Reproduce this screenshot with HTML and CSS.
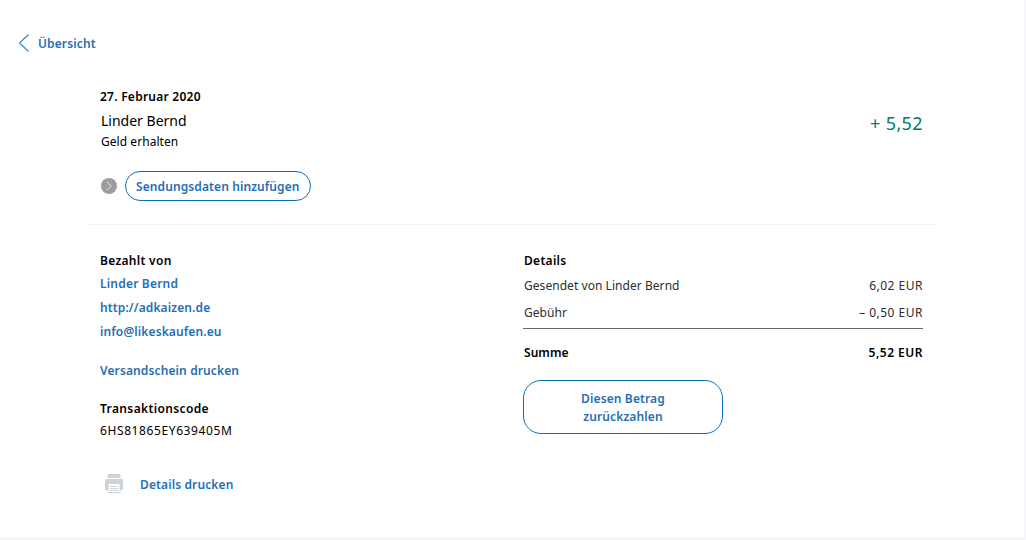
FILE: index.html
```html
<!DOCTYPE html>
<html lang="de">
<head>
<meta charset="utf-8">
<title>Transaktion</title>
<link rel="stylesheet" href="styles.css">
</head>
<body>
<main class="panel">
  <a class="back link">
    <svg class="back-icon" width="12" height="20" viewBox="0 0 12 20"><path d="M10.500 1.500 1.500 10l9 8.500" fill="none" stroke="#1f8ad6" stroke-width="1.100"/></svg>
    <span>Übersicht</span>
  </a>
  <section class="detail">
    <header class="head">
      <div class="head-row">
        <div>
          <div class="date">27. Februar 2020</div>
          <div class="name">Linder Bernd</div>
          <div class="status">Geld erhalten</div>
        </div>
        <div class="amount">+ 5,52</div>
      </div>
      <div class="ship">
        <svg class="ship-icon" width="16" height="16" viewBox="0 0 16 16"><circle cx="8" cy="8" r="8" fill="#9c9c9c"/><path d="M6 3.800 10.200 8 6 12.200" fill="none" stroke="#e8e8e8" stroke-width="1"/></svg>
        <a class="pill link">Sendungsdaten hinzufügen</a>
      </div>
    </header>
    <div class="columns">
      <div class="left">
        <h3 class="label">Bezahlt von</h3>
        <a class="link line line-first">Linder Bernd</a>
        <a class="link line">http://adkaizen.de</a>
        <a class="link line">info@likeskaufen.eu</a>
        <a class="link line print-slip">Versandschein drucken</a>
        <h3 class="label code-label">Transaktionscode</h3>
        <div class="code">6HS81865EY639405M</div>
        <a class="print link">
          <svg class="print-icon" width="20" height="20" viewBox="0 0 20 20"><path fill="#cdd4d9" d="M3.500 0h11A1 1 0 0 1 15.500 1v3h-13V1a1 1 0 0 1 1-1zM1.500 5h15A1.500 1.500 0 0 1 18 6.500V15a1 1 0 0 1-1 1h-1.500v3h-13v-3H1a1 1 0 0 1-1-1V6.500A1.500 1.500 0 0 1 1.500 5z"/><path fill="#fff" d="M3.500 10h11v8h-11z"/><path stroke="#cdd4d9" stroke-width="1" d="M5 12.500h8M5 14.500h8M5 16.500h8"/></svg>
          <span>Details drucken</span>
        </a>
      </div>
      <div class="right">
        <h3 class="label">Details</h3>
        <div class="row first"><span>Gesendet von Linder Bernd</span><span class="sum">6,02 EUR</span></div>
        <div class="row second"><span>Gebühr</span><span class="sum">– 0,50 EUR</span></div>
        <div class="row total"><span>Summe</span><span class="sum">5,52 EUR</span></div>
        <a class="refund link">Diesen Betrag<br>zurückzahlen</a>
      </div>
    </div>
  </section>
</main>
</body>
</html>
```
FILE: styles.css
```css
* { box-sizing: border-box; }
html, body { margin: 0; padding: 0; }
body {
  background: #f5f7fa;
  font-family: "Noto Sans", sans-serif;
  font-size: 12px;
  letter-spacing: .12px;
  color: #000;
  height: 540px;
  overflow: hidden;
}
.panel { width: 1024px; height: 537px; background: #fff; padding-top: 33px; }
.link { color: #1f6fb5; font-weight: 600; }
.back { display: flex; align-items: center; gap: 8px; height: 20px; padding-left: 18px; }
.back-icon { display: block; }
.detail { width: 847px; margin: 35px 0 0 88px; }
.head { padding: 0 12px 23px; border-bottom: 1px solid #f2f2f2; }
.head-row { display: flex; justify-content: space-between; }
.date { font-weight: 600; line-height: 18px; letter-spacing: .25px; }
.name { font-size: 14px; line-height: 20px; margin-top: 5px; padding-left: 1px; letter-spacing: 0; }
.status { line-height: 18px; margin-top: 2px; padding-left: 1px; letter-spacing: .05px; }
.amount { font-size: 18px; letter-spacing: .4px; color: #00796b; line-height: 24px; margin-top: 23px; }
.ship { display: flex; align-items: center; gap: 8px; margin-top: 20px; margin-left: 1px; }
.ship-icon { display: block; }
.pill {
  display: block; height: 30px; line-height: 30px; padding: 0 10px;
  border: 1px solid #0b6fb3; border-radius: 15px; letter-spacing: .1px;
}
.columns { display: flex; padding: 27px 12px 0; }
.left { width: 423px; }
.right { width: 400px; }
.label { margin: 0; font-size: 12px; font-weight: 600; line-height: 18px; letter-spacing: .3px; }
.right .label, .row > span:first-child { padding-left: 1px; }
.line { display: block; line-height: 18px; margin-top: 6px; }
.line-first { margin-top: 5px; letter-spacing: .2px; }
.print-slip { margin-top: 21px; }
.code-label { margin-top: 20px; letter-spacing: .37px; }
.code { line-height: 18px; margin-top: 4px; letter-spacing: .6px; }
.print { display: flex; align-items: center; gap: 15px; margin: 34px 0 0 5px; }
.print-icon { display: block; }
.row { display: flex; justify-content: space-between; line-height: 18px; color: #2c2e2f; letter-spacing: .05px; }
.row .sum { letter-spacing: .5px; }
.first { margin-top: 7px; }
.second { margin-top: 9px; padding-bottom: 6px; border-bottom: 1px solid #5f6b72; }
.total { color: #000; font-weight: 600; margin-top: 15px; }
.refund {
  display: block; width: 200px; height: 54px; margin-top: 18px; padding-top: 9px;
  text-align: center; line-height: 18px;
  border: 1px solid #0b6fb3; border-radius: 18px;
}
```
